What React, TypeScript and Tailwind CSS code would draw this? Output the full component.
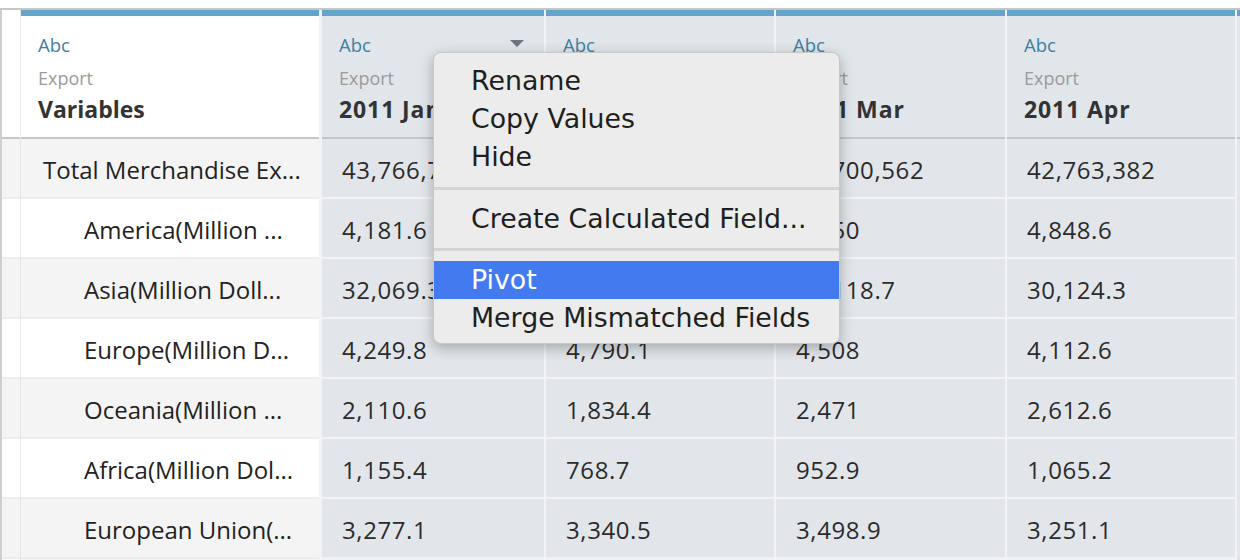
import React from "react";

type Row = { label: string; indent: boolean; vals: string[] };

const rows: Row[] = [
  { label: "Total Merchandise Ex...", indent: false, vals: ["43,766,712", "42,904,418", "38,700,562", "42,763,382"] },
  { label: "America(Million ...", indent: true, vals: ["4,181.6", "3,889.2", "4,150", "4,848.6"] },
  { label: "Asia(Million Doll...", indent: true, vals: ["32,069.3", "31,620.5", "31,118.7", "30,124.3"] },
  { label: "Europe(Million D...", indent: true, vals: ["4,249.8", "4,790.1", "4,508", "4,112.6"] },
  { label: "Oceania(Million ...", indent: true, vals: ["2,110.6", "1,834.4", "2,471", "2,612.6"] },
  { label: "Africa(Million Dol...", indent: true, vals: ["1,155.4", "768.7", "952.9", "1,065.2"] },
  { label: "European Union(...", indent: true, vals: ["3,277.1", "3,340.5", "3,498.9", "3,251.1"] },
];

const headers = ["2011 Jan", "2011 Feb", "2011 Mar", "2011 Apr"];
const widths = ["w-[222px]", "w-[228px]", "w-[229px]", "w-[228px]"];

function HeaderText({ title, arrow, digits }: { title: string; arrow?: boolean; digits?: boolean }) {
  return (
    <div className="flex flex-col pl-[17px] pt-[19px]">
      <div className="flex items-center justify-between pr-[20px] h-[20px]">
        <span className="text-[18.5px] leading-[20px] text-[#3f80a3]">Abc</span>
        {arrow && (
          <svg width="14" height="8" viewBox="0 0 14 8" className="mt-[-2px]">
            <polygon points="0,0 14,0 7,7" fill="#6b7681" />
          </svg>
        )}
      </div>
      <div className="mt-[13px] text-[18px] leading-[20px] text-[#9b9b9b]">Export</div>
      <div
        className={`mt-[8px] text-[23px] leading-[26px] font-bold text-[#333333] ${
          digits ? "tracking-[0.9px]" : ""
        }`}
      >
        {title}
      </div>
    </div>
  );
}

export default function App() {
  return (
    <div
      className="relative w-[1240px] h-[560px] overflow-hidden bg-white"
      style={{ fontFamily: '"Open Sans", "Noto Sans", sans-serif' }}
    >
      <div className="h-[8px] bg-white" />
      <div className="flex h-[552px] border-t-2 border-[#c6c6c6]">
        {/* left gutter */}
        <div className="w-[2px] bg-[#cfcfcf]" />
        <div className="flex w-[19px] flex-col bg-[#fafafa] border-r border-[#e6e6e6]">
          <div className="h-[127px] bg-white" />
          <div className="h-[2px] bg-[#c6c6c6]" />
          {rows.map((_, i) => (
            <div key={i} className="flex flex-col">
              <div className={`h-[58px] ${i % 2 === 0 ? "bg-[#f4f4f4]" : "bg-white"}`} />
              <div className="h-[2px] bg-[#ececec]" />
            </div>
          ))}
        </div>

        {/* columns */}
        <div className="flex flex-1 gap-[2px] bg-[#f1f3f5]">
          {/* first column */}
          <div className="flex w-[298px] flex-col mr-[1px]">
            <div className="h-[6px] bg-[#63a4c8]" />
            <div className="h-[121px] bg-white">
              <HeaderText title="Variables" />
            </div>
            <div className="h-[2px] bg-[#c6c6c6]" />
            {rows.map((r, i) => (
              <div key={i} className="flex flex-col">
                <div
                  className={`flex h-[58px] items-center pt-[3px] text-[24px] text-[#222222] ${
                    i % 2 === 0 ? "bg-[#f4f4f4]" : "bg-white"
                  } ${r.indent ? "pl-[63px]" : "pl-[22px]"}`}
                >
                  <span className="whitespace-nowrap">{r.label}</span>
                </div>
                <div className="h-[2px] bg-[#ececec]" />
              </div>
            ))}
          </div>

          {headers.map((h, c) => (
            <div key={h} className={`flex ${widths[c]} flex-col`}>
              <div className="h-[6px] bg-[#63a4c8]" />
              <div className="h-[121px] bg-[#e1e6ea]">
                <HeaderText title={h} arrow={c === 0} digits />
              </div>
              <div className="h-[2px] bg-[#c6c6c6]" />
              {rows.map((r, i) => (
                <div key={i} className="flex flex-col">
                  <div className="flex h-[58px] items-center bg-[#e2e6ea] pl-[20px] pt-[3px] text-[24px] tracking-[0.6px] text-[#2b2b2b]">
                    <span className="whitespace-nowrap">{r.vals[c]}</span>
                  </div>
                  <div className="h-[2px] bg-[#f1f2f3]" />
                </div>
              ))}
            </div>
          ))}

          <div className="flex flex-1 flex-col">
            <div className="h-[6px] bg-[#63a4c8]" />
            <div className="h-[121px] bg-[#e1e6ea]" />
            <div className="h-[2px] bg-[#c6c6c6]" />
            <div className="flex-1 bg-[#e2e6ea]" />
          </div>
        </div>
      </div>

      {/* context menu */}
      <div
        className="absolute left-[433px] top-[52px] w-[407px] rounded-[8px] border border-[#c9c9c9] bg-[#ececec] pt-[9px] pb-[6px] text-[26.8px] text-[#1e1e1e] shadow-[0_4px_14px_rgba(0,0,0,0.28)]"
        style={{ fontFamily: '"DejaVu Sans", "Liberation Sans", sans-serif' }}
      >
        <div className="flex h-[38px] items-center pl-[37px]">Rename</div>
        <div className="flex h-[38px] items-center pl-[37px]">Copy Values</div>
        <div className="flex h-[38px] items-center pl-[37px]">Hide</div>
        <div className="flex h-[24px] items-center">
          <div className="h-[3px] w-full bg-[#d4d4d4]" />
        </div>
        <div className="flex h-[38px] items-center pl-[37px]">Create Calculated Field...</div>
        <div className="flex h-[23px] items-center">
          <div className="h-[3px] w-full bg-[#d4d4d4]" />
        </div>
        <div className="flex h-[38px] items-center bg-[#437af0] pl-[37px] text-white">Pivot</div>
        <div className="flex h-[38px] items-center pl-[37px]">Merge Mismatched Fields</div>
      </div>
    </div>
  );
}
